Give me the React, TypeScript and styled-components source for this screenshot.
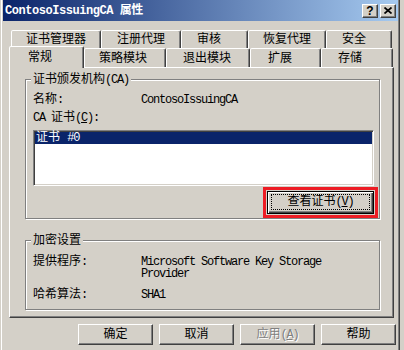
import styled, { createGlobalStyle, css } from "styled-components";

// Windows classic palette.
const FACE = "#d4d0c8";
const LIGHT = "#ffffff";
const SHADOW = "#808080";
const DARK = "#404040";
const NAVY = "#0a246a";
const FONT = `"Liberation Mono", "Noto Sans CJK SC", monospace`;

const GlobalStyle = createGlobalStyle`
    * { box-sizing: border-box; }
    html, body { margin: 0; padding: 0; background: ${FACE}; }
    body { font-family: ${FONT}; font-size: 12px; line-height: 12px; color: #000; }
`;

const raised = css`
    border: 1px solid;
    border-color: ${LIGHT} ${DARK} ${DARK} ${LIGHT};
    box-shadow: inset -1px -1px ${SHADOW};
    background: ${FACE};
`;

// Latin runs: SimSun-like half-width cells (6px).
const En = styled.span`
    letter-spacing: -1.2px;
`;

const Window = styled.div`
    width: 404px;
    height: 350px;
    padding: 0 6px 0 3px;
    display: flex;
    flex-direction: column;
    background: ${FACE};
    overflow: hidden;
    box-shadow: inset 1px 0 ${FACE}, inset 2px 0 ${LIGHT},
        inset -4px 0 ${FACE}, inset -5px 0 ${DARK}, inset -6px 0 ${SHADOW};
`;

const TitleBar = styled.div`
    flex: none;
    height: 21px;
    display: flex;
    align-items: center;
    padding: 0 2px;
    background: linear-gradient(to right, ${NAVY}, #a6caf0);
    color: #fff;
    font-weight: bold;
`;

const TitleText = styled.span`
    letter-spacing: -0.45px;
`;

const CaptionButtons = styled.div`
    margin-left: auto;
    display: flex;
    gap: 2px;
`;

const CaptionButton = styled.div`
    ${raised}
    width: 16px;
    height: 14px;
    display: flex;
    align-items: center;
    justify-content: center;
    color: #000;
    font-family: "Liberation Sans", sans-serif;
    font-size: 12px;
    font-weight: bold;
`;

const Content = styled.div`
    flex: 1;
    display: flex;
    flex-direction: column;
    padding: 9px 0 0 6px;
`;

const TabRow = styled.div<{ $front?: boolean }>`
    display: flex;
    align-items: flex-end;
    height: ${(p) => (p.$front ? 19 : 18)}px;
    padding-left: ${(p) => (p.$front ? 0 : 2)}px;
`;

const Tab = styled.div<{ $w: number; $x: number; $sel?: boolean }>`
    position: relative;
    z-index: ${(p) => (p.$sel ? 2 : 0)};
    flex: none;
    width: ${(p) => p.$w}px;
    height: ${(p) => (p.$sel ? "22px" : "100%")};
    margin-bottom: ${(p) => (p.$sel ? -1 : 0)}px;
    padding: ${(p) => (p.$sel ? 0 : 1)}px 0 0 ${(p) => p.$x - 1}px;
    display: flex;
    align-items: center;
    border: 1px solid;
    border-bottom: none;
    border-color: ${LIGHT} ${DARK} transparent ${LIGHT};
    border-radius: 2px 2px 0 0;
    box-shadow: inset -1px 0 ${SHADOW};
    background: ${FACE};
    white-space: nowrap;
`;

const Page = styled.div`
    width: 385px;
    height: 251px;
    padding: 11px 0 0 15px;
    display: flex;
    flex-direction: column;
    border: 1px solid;
    border-color: ${LIGHT} ${DARK} ${DARK} ${LIGHT};
    box-shadow: inset -1px -1px ${SHADOW};
`;

const Group = styled.div<{ $h: number; $gap?: number }>`
    position: relative;
    width: 355px;
    height: ${(p) => p.$h}px;
    margin-top: ${(p) => p.$gap ?? 0}px;
    padding-left: 7px;
    display: flex;
    flex-direction: column;
    border: 1px solid ${SHADOW};
    box-shadow: inset 1px 1px ${LIGHT}, 1px 1px ${LIGHT};
`;

const Legend = styled.span`
    position: absolute;
    top: -6px;
    left: 5px;
    padding: 0 2px;
    background: ${FACE};
    white-space: nowrap;
`;

const Field = styled.div<{ $gap: number }>`
    display: flex;
    margin-top: ${(p) => p.$gap}px;
    white-space: nowrap;
`;

const Label = styled.span`
    flex: none;
    width: 108px;
`;

const Value = styled.span<{ $w?: number }>`
    width: ${(p) => (p.$w ? `${p.$w}px` : "auto")};
    white-space: normal;
    letter-spacing: -1.2px;
`;

const ListBox = styled.div`
    width: 341px;
    height: 56px;
    margin-top: 6px;
    padding: 1px;
    background: #fff;
    border: 1px solid;
    border-color: ${SHADOW} ${LIGHT} ${LIGHT} ${SHADOW};
    box-shadow: inset 1px 1px ${DARK}, inset -1px -1px ${FACE};
`;

const ListItem = styled.div<{ $sel?: boolean }>`
    height: 12px;
    padding-left: 1px;
    background: ${(p) => (p.$sel ? NAVY : "transparent")};
    color: ${(p) => (p.$sel ? "#fff" : "#000")};
    white-space: nowrap;
`;

const Highlight = styled.div`
    align-self: flex-end;
    margin: 1px 1px 0 0;
    padding: 1px;
    border: 3px solid #ed1c24;
`;

const DefaultButton = styled.button`
    width: 107px;
    height: 23px;
    padding: 0;
    display: flex;
    font: inherit;
    color: #000;
    background: ${FACE};
    border: 1px solid #000;
    box-shadow: inset 1px 1px ${LIGHT}, inset -1px -1px ${DARK}, inset -2px -2px ${SHADOW};
`;

const FocusRing = styled.span`
    flex: 1;
    margin: 2px 3px 3px 3px;
    display: flex;
    align-items: center;
    justify-content: center;
    border: 1px dotted #000;
    white-space: nowrap;
`;

const ButtonRow = styled.div`
    display: flex;
    justify-content: flex-end;
    gap: 6px;
    padding: 6px 2px 0 0;
`;

const PushButton = styled.button<{ $disabled?: boolean }>`
    ${raised}
    width: 75px;
    height: 21px;
    padding: 0;
    font: inherit;
    color: ${(p) => (p.$disabled ? SHADOW : "#000")};
    text-shadow: ${(p) => (p.$disabled ? `1px 1px ${LIGHT}` : "none")};
    white-space: nowrap;
`;

const backTabs = [
    { label: "证书管理器", w: 90, x: 15 },
    { label: "注册代理", w: 80, x: 16 },
    { label: "审核", w: 67, x: 16 },
    { label: "恢复代理", w: 78, x: 15 },
    { label: "安全", w: 66, x: 16 },
];

const frontTabs = [
    { label: "常规", w: 75, x: 19, sel: true },
    { label: "策略模块", w: 82, x: 15 },
    { label: "退出模块", w: 84, x: 17 },
    { label: "扩展", w: 71, x: 18 },
    { label: "存储", w: 72, x: 17 },
];

export default function App() {
    return (
        <>
            <GlobalStyle />
            <Window>
                <TitleBar>
                    <TitleText>ContosoIssuingCA 属性</TitleText>
                    <CaptionButtons>
                        <CaptionButton>?</CaptionButton>
                        <CaptionButton>
                            <svg width="8" height="7" viewBox="0 0 8 7">
                                <path d="M0.5 0.5 L7.5 6.5 M7.5 0.5 L0.5 6.5" stroke="#000" strokeWidth="1.7" />
                            </svg>
                        </CaptionButton>
                    </CaptionButtons>
                </TitleBar>

                <Content>
                    <TabRow>
                        {backTabs.map((t) => (
                            <Tab key={t.label} $w={t.w} $x={t.x}>{t.label}</Tab>
                        ))}
                    </TabRow>
                    <TabRow $front>
                        {frontTabs.map((t) => (
                            <Tab key={t.label} $w={t.w} $x={t.x} $sel={t.sel}>{t.label}</Tab>
                        ))}
                    </TabRow>

                    <Page>
                        <Group $h={140}>
                            <Legend>证书颁发机构<En>(CA)</En></Legend>
                            <Field $gap={14}>
                                <Label>名称:</Label>
                                <Value>ContosoIssuingCA</Value>
                            </Field>
                            <Field $gap={6}>
                                <Label><En>CA </En>证书<En>(<u>C</u>):</En></Label>
                            </Field>
                            <ListBox>
                                <ListItem $sel>证书 <En>#0</En></ListItem>
                            </ListBox>
                            <Highlight>
                                <DefaultButton>
                                    <FocusRing>查看证书<En>(<u>V</u>)</En></FocusRing>
                                </DefaultButton>
                            </Highlight>
                        </Group>

                        <Group $h={70} $gap={21}>
                            <Legend>加密设置</Legend>
                            <Field $gap={15}>
                                <Label>提供程序:</Label>
                                <Value $w={200}>Microsoft Software Key Storage Provider</Value>
                            </Field>
                            <Field $gap={9}>
                                <Label>哈希算法:</Label>
                                <Value>SHA1</Value>
                            </Field>
                        </Group>
                    </Page>

                    <ButtonRow>
                        <PushButton>确定</PushButton>
                        <PushButton>取消</PushButton>
                        <PushButton $disabled>应用<En>(<u>A</u>)</En></PushButton>
                        <PushButton>帮助</PushButton>
                    </ButtonRow>
                </Content>
            </Window>
        </>
    );
}
